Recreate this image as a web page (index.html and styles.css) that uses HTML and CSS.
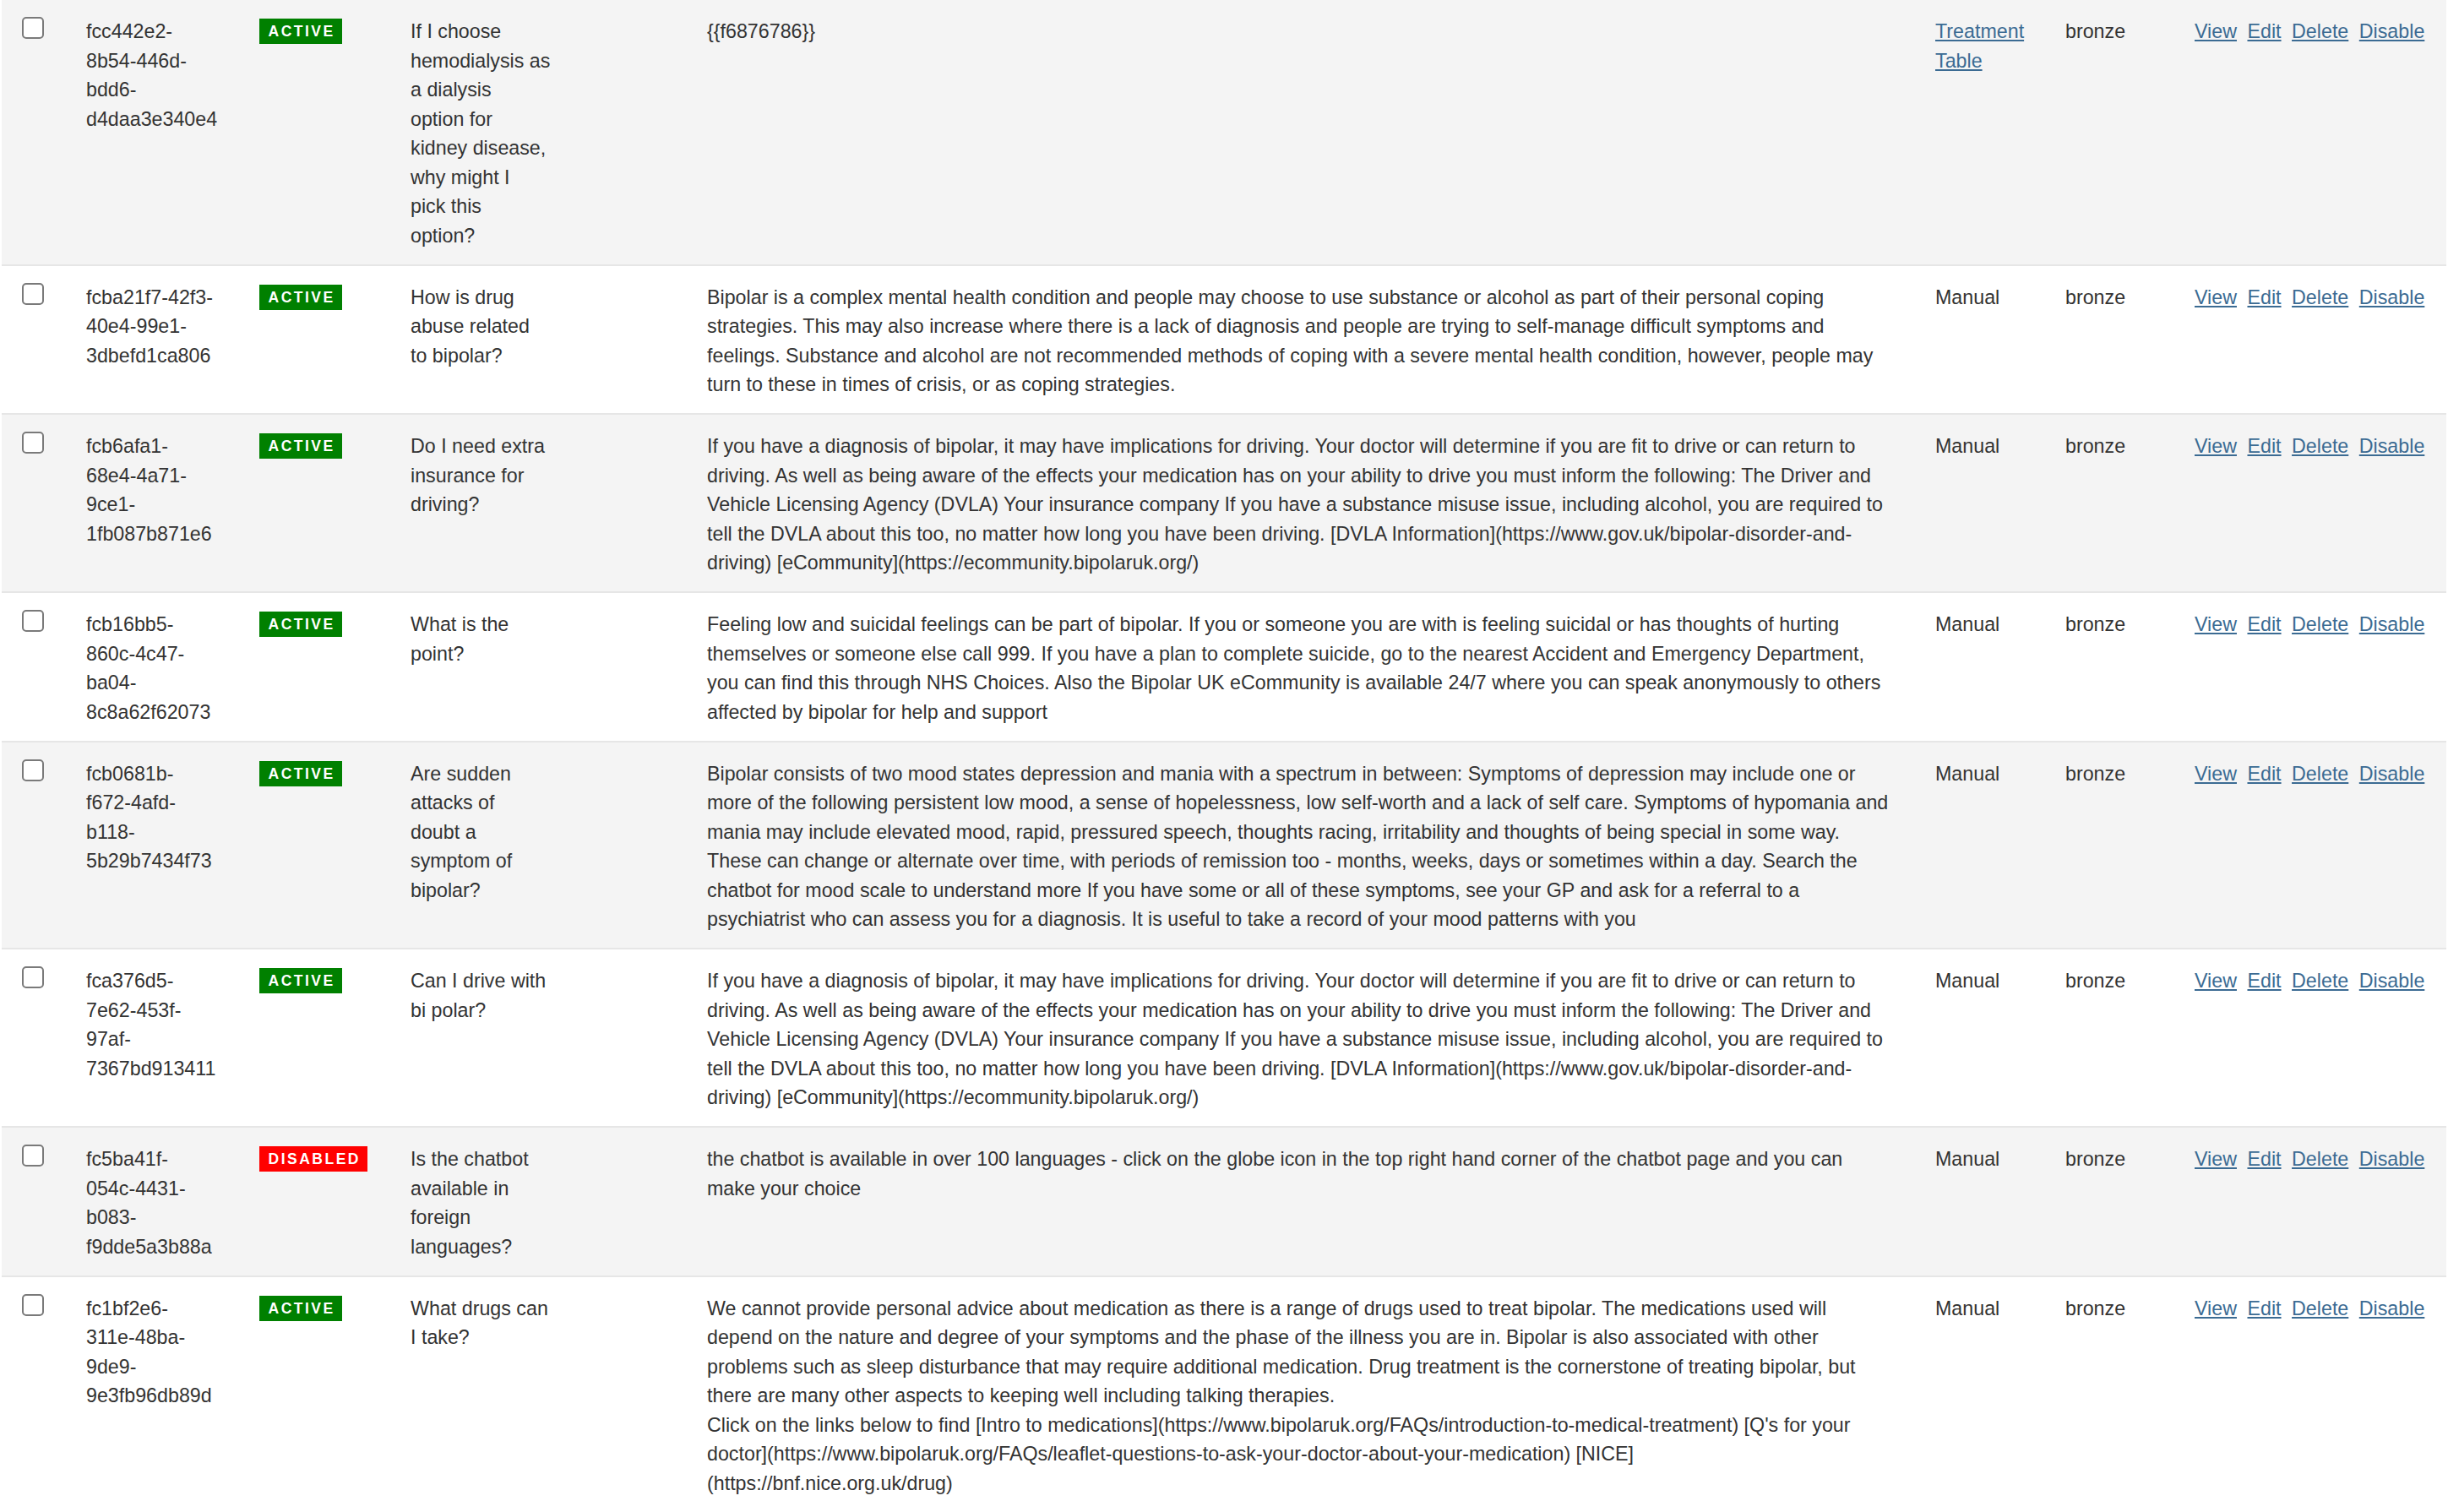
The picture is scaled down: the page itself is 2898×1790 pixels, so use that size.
FILE: index.html
```html
<!DOCTYPE html>
<html lang="en">
<head>
<meta charset="utf-8">
<title>Answers</title>
<link rel="stylesheet" href="styles.css">
</head>
<body>
<div class="wrap">
<table class="grid">
  <colgroup>
    <col class="c-check"><col class="c-id"><col class="c-status"><col class="c-q"><col class="c-a"><col class="c-src"><col class="c-lvl"><col class="c-act">
  </colgroup>
  <tbody>
    <tr>
      <td><input type="checkbox" class="cb"></td>
      <td><div class="uid">fcc442e2-<wbr>8b54-<wbr>446d-<wbr>bdd6-<wbr>d4daa3e340e4</div></td>
      <td><span class="badge active">ACTIVE</span></td>
      <td><div class="q">If I choose<br>hemodialysis as<br>a dialysis<br>option for<br>kidney disease,<br>why might I<br>pick this<br>option?</div></td>
      <td>{{f6876786}}</td>
      <td><a href="#">Treatment Table</a></td>
      <td>bronze</td>
      <td><div class="acts"><a href="#">View</a><a href="#">Edit</a><a href="#">Delete</a><a href="#">Disable</a></div></td>
    </tr>
    <tr>
      <td><input type="checkbox" class="cb"></td>
      <td><div class="uid">fcba21f7-<wbr>42f3-<wbr>40e4-<wbr>99e1-<wbr>3dbefd1ca806</div></td>
      <td><span class="badge active">ACTIVE</span></td>
      <td><div class="q">How is drug<br>abuse related<br>to bipolar?</div></td>
      <td>Bipolar is a complex mental health condition and people may choose to use substance or alcohol as part of their personal coping strategies. This may also increase where there is a lack of diagnosis and people are trying to self-manage difficult symptoms and feelings. Substance and alcohol are not recommended methods of coping with a severe mental health condition, however, people may turn to these in times of crisis, or as coping strategies.</td>
      <td>Manual</td>
      <td>bronze</td>
      <td><div class="acts"><a href="#">View</a><a href="#">Edit</a><a href="#">Delete</a><a href="#">Disable</a></div></td>
    </tr>
    <tr>
      <td><input type="checkbox" class="cb"></td>
      <td><div class="uid">fcb6afa1-<wbr>68e4-<wbr>4a71-<wbr>9ce1-<wbr>1fb087b871e6</div></td>
      <td><span class="badge active">ACTIVE</span></td>
      <td><div class="q">Do I need extra<br>insurance for<br>driving?</div></td>
      <td>If you have a diagnosis of bipolar, it may have implications for driving. Your doctor will determine if you are fit to drive or can return to driving. As well as being aware of the effects your medication has on your ability to drive you must inform the following: The Driver and Vehicle Licensing Agency (DVLA) Your insurance company If you have a substance misuse issue, including alcohol, you are required to tell the DVLA about this too, no matter how long you have been driving. [DVLA Information](https://www.gov.uk/bipolar-disorder-and-driving) [eCommunity](https://ecommunity.bipolaruk.org/)</td>
      <td>Manual</td>
      <td>bronze</td>
      <td><div class="acts"><a href="#">View</a><a href="#">Edit</a><a href="#">Delete</a><a href="#">Disable</a></div></td>
    </tr>
    <tr>
      <td><input type="checkbox" class="cb"></td>
      <td><div class="uid">fcb16bb5-<wbr>860c-<wbr>4c47-<wbr>ba04-<wbr>8c8a62f62073</div></td>
      <td><span class="badge active">ACTIVE</span></td>
      <td><div class="q">What is the<br>point?</div></td>
      <td>Feeling low and suicidal feelings can be part of bipolar. If you or someone you are with is feeling suicidal or has thoughts of hurting themselves or someone else call 999. If you have a plan to complete suicide, go to the nearest Accident and Emergency Department, you can find this through NHS Choices. Also the Bipolar UK eCommunity is available 24/7 where you can speak anonymously to others affected by bipolar for help and support</td>
      <td>Manual</td>
      <td>bronze</td>
      <td><div class="acts"><a href="#">View</a><a href="#">Edit</a><a href="#">Delete</a><a href="#">Disable</a></div></td>
    </tr>
    <tr>
      <td><input type="checkbox" class="cb"></td>
      <td><div class="uid">fcb0681b-<wbr>f672-<wbr>4afd-<wbr>b118-<wbr>5b29b7434f73</div></td>
      <td><span class="badge active">ACTIVE</span></td>
      <td><div class="q">Are sudden<br>attacks of<br>doubt a<br>symptom of<br>bipolar?</div></td>
      <td>Bipolar consists of two mood states depression and mania with a spectrum in between: Symptoms of depression may include one or more of the following persistent low mood, a sense of hopelessness, low self-worth and a lack of self care. Symptoms of hypomania and mania may include elevated mood, rapid, pressured speech, thoughts racing, irritability and thoughts of being special in some way. These can change or alternate over time, with periods of remission too - months, weeks, days or sometimes within a day. Search the chatbot for mood scale to understand more If you have some or all of these symptoms, see your GP and ask for a referral to a psychiatrist who can assess you for a diagnosis. It is useful to take a record of your mood patterns with you</td>
      <td>Manual</td>
      <td>bronze</td>
      <td><div class="acts"><a href="#">View</a><a href="#">Edit</a><a href="#">Delete</a><a href="#">Disable</a></div></td>
    </tr>
    <tr>
      <td><input type="checkbox" class="cb"></td>
      <td><div class="uid">fca376d5-<wbr>7e62-<wbr>453f-<wbr>97af-<wbr>7367bd913411</div></td>
      <td><span class="badge active">ACTIVE</span></td>
      <td><div class="q">Can I drive with<br>bi polar?</div></td>
      <td>If you have a diagnosis of bipolar, it may have implications for driving. Your doctor will determine if you are fit to drive or can return to driving. As well as being aware of the effects your medication has on your ability to drive you must inform the following: The Driver and Vehicle Licensing Agency (DVLA) Your insurance company If you have a substance misuse issue, including alcohol, you are required to tell the DVLA about this too, no matter how long you have been driving. [DVLA Information](https://www.gov.uk/bipolar-disorder-and-driving) [eCommunity](https://ecommunity.bipolaruk.org/)</td>
      <td>Manual</td>
      <td>bronze</td>
      <td><div class="acts"><a href="#">View</a><a href="#">Edit</a><a href="#">Delete</a><a href="#">Disable</a></div></td>
    </tr>
    <tr>
      <td><input type="checkbox" class="cb"></td>
      <td><div class="uid">fc5ba41f-<wbr>054c-<wbr>4431-<wbr>b083-<wbr>f9dde5a3b88a</div></td>
      <td><span class="badge disabled">DISABLED</span></td>
      <td><div class="q">Is the chatbot<br>available in<br>foreign<br>languages?</div></td>
      <td>the chatbot is available in over 100 languages - click on the globe icon in the top right hand corner of the chatbot page and you can make your choice</td>
      <td>Manual</td>
      <td>bronze</td>
      <td><div class="acts"><a href="#">View</a><a href="#">Edit</a><a href="#">Delete</a><a href="#">Disable</a></div></td>
    </tr>
    <tr>
      <td><input type="checkbox" class="cb"></td>
      <td><div class="uid">fc1bf2e6-<wbr>311e-<wbr>48ba-<wbr>9de9-<wbr>9e3fb96db89d</div></td>
      <td><span class="badge active">ACTIVE</span></td>
      <td><div class="q">What drugs can<br>I take?</div></td>
      <td>We cannot provide personal advice about medication as there is a range of drugs used to treat bipolar. The medications used will depend on the nature and degree of your symptoms and the phase of the illness you are in. Bipolar is also associated with other problems such as sleep disturbance that may require additional medication. Drug treatment is the cornerstone of treating bipolar, but there are many other aspects to keeping well including talking therapies.<br>Click on the links below to find [Intro to medications](https://www.bipolaruk.org/FAQs/introduction-to-medical-treatment) [Q's for your doctor](https://www.bipolaruk.org/FAQs/leaflet-questions-to-ask-your-doctor-about-your-medication) [NICE]<br>(https://bnf.nice.org.uk/drug)</td>
      <td>Manual</td>
      <td>bronze</td>
      <td><div class="acts"><a href="#">View</a><a href="#">Edit</a><a href="#">Delete</a><a href="#">Disable</a></div></td>
    </tr>
  </tbody>
</table>
</div>
</body>
</html>
```

FILE: styles.css
```css
html, body {
  margin: 0;
  padding: 0;
  background: #ffffff;
}

body {
  font-family: "Liberation Sans", Arial, Helvetica, sans-serif;
  font-size: 23.25px;
  line-height: 34.5px;
  color: #333333;
}

.wrap {
  padding: 0 2px;
}

.grid {
  width: 100%;
  border-collapse: collapse;
  table-layout: fixed;
}

.c-check { width: 76px; }
.c-id { width: 205px; }
.c-status { width: 179px; }
.c-q { width: 351px; }
.c-a { width: 1454px; }
.c-src { width: 154px; }
.c-lvl { width: 153px; }
.c-act { width: 322px; }

.grid td {
  vertical-align: top;
  padding: 20px 24px 16.5px;
  border-bottom: 2px solid #e6e6e6;
}

.grid tbody tr:nth-child(odd) {
  background: #f4f4f4;
}

.grid tbody tr:nth-child(even) {
  background: #ffffff;
}

.cb {
  -webkit-appearance: none;
  appearance: none;
  display: block;
  box-sizing: border-box;
  width: 26px;
  height: 26px;
  margin: 0;
  border: 2px solid #7a7a7a;
  border-radius: 5px;
  background: #ffffff;
}

.uid {
  max-width: 154px;
}

.q {
  max-width: 220px;
}

.badge {
  display: inline-block;
  vertical-align: top;
  margin-top: 2px;
  height: 30px;
  line-height: 30px;
  padding: 0 8px 0 10.5px;
  font-size: 17.5px;
  font-weight: bold;
  letter-spacing: 2.5px;
  color: #ffffff;
}

.badge.active {
  background: #008000;
}

.badge.disabled {
  background: #ff0000;
}

a {
  color: #3b6b93;
  text-decoration: underline;
}

.acts {
  display: flex;
  gap: 12.5px;
  white-space: nowrap;
}
```
